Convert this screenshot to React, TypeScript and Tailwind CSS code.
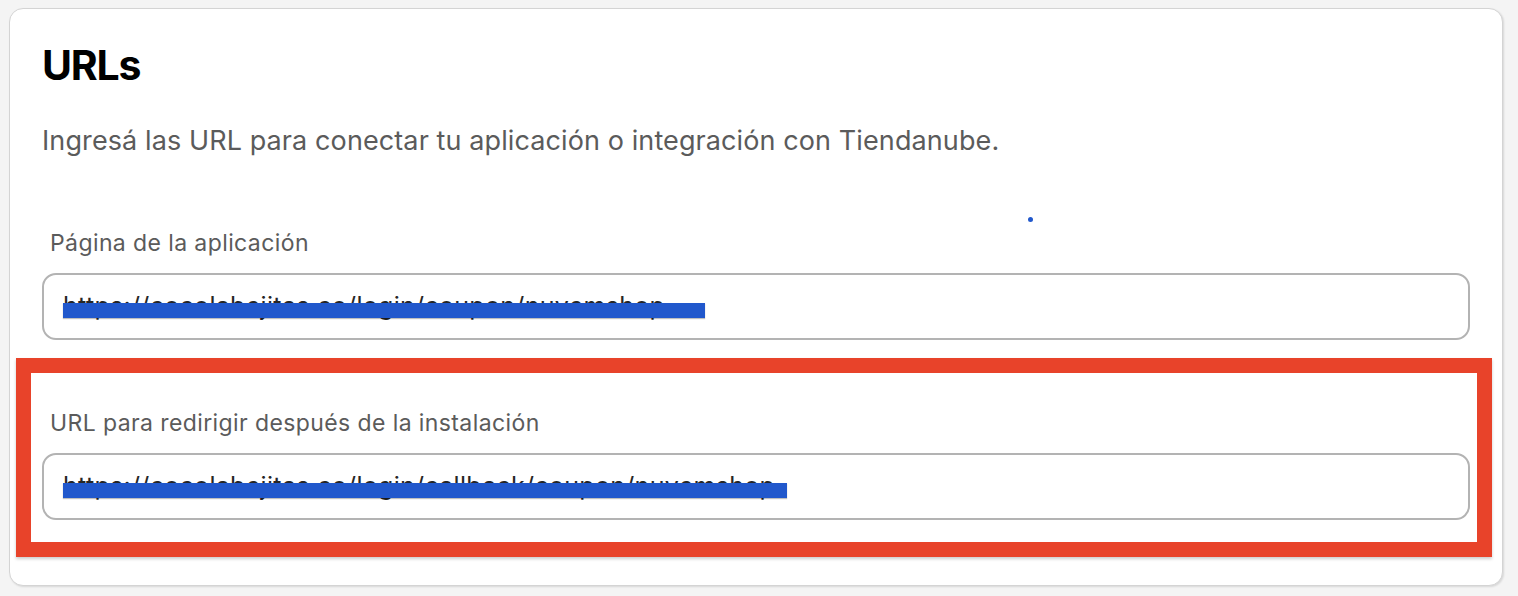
import React from 'react';

const font = { fontFamily: 'Inter, "Noto Sans", sans-serif' };

const UrlField: React.FC<{ label: string; value: string; strikeWidth: number }> = ({ label, value, strikeWidth }) => (
  <div>
    <div className="ml-[8px] text-[23px] leading-[28px] tracking-[0.4px] text-[#5b5b5b]">{label}</div>
    <div className="relative mt-[16px] h-[67px] rounded-[14px] border-2 border-[#b3b3b3] flex items-center px-[19px]">
      <span className="text-[25px] text-[#262626] tracking-[0.3px]">{value}</span>
      {/* blue scribble covering the url */}
      <div
        className="absolute left-[19px] top-[28px] h-[15px] bg-[#2158cc] shadow-[0_1px_1px_rgba(0,0,0,0.25)]"
        style={{ width: strikeWidth }}
      />
    </div>
  </div>
);

const App: React.FC = () => {
  return (
    <div className="min-h-[596px] bg-[#f4f4f4] pt-[8px] pl-[9px]" style={font}>
      <div className="relative w-[1494px] h-[578px] bg-white rounded-[14px] border border-[#d4d4d4] shadow-[1px_1px_2px_rgba(0,0,0,0.12)] pt-[32px] pl-[32px] pr-[32px]">
        <h1 className="text-[41px] leading-[48px] font-bold text-black tracking-[-1.2px]">URLs</h1>
        <p className="mt-[36px] text-[27px] leading-[32px] tracking-[0.1px] text-[#5b5b5b]">
          Ingresá las URL para conectar tu aplicación o integración con Tiendanube.
        </p>

        {/* stray dot */}
        <div className="absolute left-[1018px] top-[208px] w-[5px] h-[5px] rounded-full bg-[#2158cc]" />

        <div className="mt-[72px]">
          <UrlField label="Página de la aplicación" value="https://cocolabejitas.co/login/coupon/nuvemshop" strikeWidth={642} />
        </div>

        {/* highlighted field */}
        <div className="mt-[18px] ml-[-26px] mr-[-22px] border-[15px] border-[#e8432a] shadow-[0_2px_3px_rgba(0,0,0,0.2)] pt-[36px] pb-[22px] pl-[11px] pr-[7px]">
          <UrlField label="URL para redirigir después de la instalación" value="https://cocolabejitas.co/login/callback/coupon/nuvemshop" strikeWidth={724} />
        </div>
      </div>
    </div>
  );
};

export default App;
